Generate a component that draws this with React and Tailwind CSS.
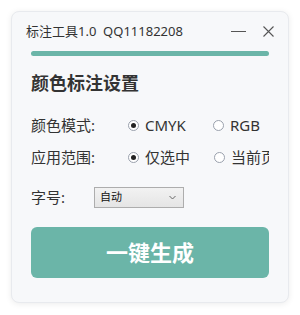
import React, { useState } from "react";

const font = { fontFamily: '"Noto Sans", "Noto Sans CJK SC", sans-serif' };

const Radio = ({ checked, label, onClick }) => (
  <button onClick={onClick} className="flex items-center gap-[6px] text-[15px] text-[#333] whitespace-nowrap">
    <span className="w-[11px] h-[11px] rounded-full border border-[#9aa1ad] bg-white flex items-center justify-center shrink-0">
      {checked && <span className="w-[5px] h-[5px] rounded-full bg-[#222]" />}
    </span>
    <span>{label}</span>
  </button>
);

const App = () => {
  const [mode, setMode] = useState("cmyk");
  const [range, setRange] = useState("sel");

  return (
    <div className="w-[300px] h-[315px] bg-white pt-[11px] pl-[11px]" style={font}>
      <div className="w-[278px] h-[292px] rounded-[8px] bg-[#f7f8fa] border border-[#e8eaee] shadow-[0_1px_6px_rgba(0,0,0,0.08)] px-[19px] flex flex-col">
        <div className="h-[39px] flex items-center -ml-[5px] text-[13px] text-[#333]">
          <span className="flex-1 whitespace-nowrap">标注工具1.0&nbsp;&nbsp;QQ11182208</span>
          <span className="w-[15px] h-px bg-[#555] mr-[17px]" />
          <svg width="11" height="11" viewBox="0 0 11 11" className="mr-[-5px]">
            <path d="M0.5 0.5L10.5 10.5M10.5 0.5L0.5 10.5" stroke="#555" strokeWidth="1.1" />
          </svg>
        </div>
        <div className="h-[5px] rounded-full bg-[#6bb5a8]" />
        <div className="mt-[15px] h-[24px] flex items-center text-[18px] font-bold text-[#333]">颜色标注设置</div>
        <div className="mt-[15px] h-[30px] flex items-center overflow-hidden">
          <span className="w-[97px] shrink-0 text-[15px] text-[#333]">颜色模式:</span>
          <div className="w-[85px] shrink-0"><Radio checked={mode === "cmyk"} label="CMYK" onClick={() => setMode("cmyk")} /></div>
          <Radio checked={mode === "rgb"} label="RGB" onClick={() => setMode("rgb")} />
        </div>
        <div className="mt-[2px] h-[30px] flex items-center overflow-hidden">
          <span className="w-[97px] shrink-0 text-[15px] text-[#333]">应用范围:</span>
          <div className="w-[86px] shrink-0"><Radio checked={range === "sel"} label="仅选中" onClick={() => setRange("sel")} /></div>
          <Radio checked={range === "page"} label="当前页" onClick={() => setRange("page")} />
        </div>
        <div className="mt-[10px] h-[30px] flex items-center">
          <span className="w-[63px] shrink-0 text-[15px] text-[#333]">字号:</span>
          <div className="w-[90px] h-[21px] border border-[#adadad] bg-gradient-to-b from-[#f2f2f2] to-[#e5e5e5] flex items-center px-[5px] text-[11px] text-[#111]">
            <span className="flex-1">自动</span>
            <svg width="7" height="5" viewBox="0 0 7 5" className="mr-[2px]">
              <path d="M0.5 1L3.5 4L6.5 1" fill="none" stroke="#666" strokeWidth="1" />
            </svg>
          </div>
        </div>
        <button className="mt-[15px] h-[51px] rounded-[6px] bg-[#6bb5a8] text-white text-[22px] font-bold flex items-center justify-center">
          一键生成
        </button>
      </div>
    </div>
  );
};

export default App;
